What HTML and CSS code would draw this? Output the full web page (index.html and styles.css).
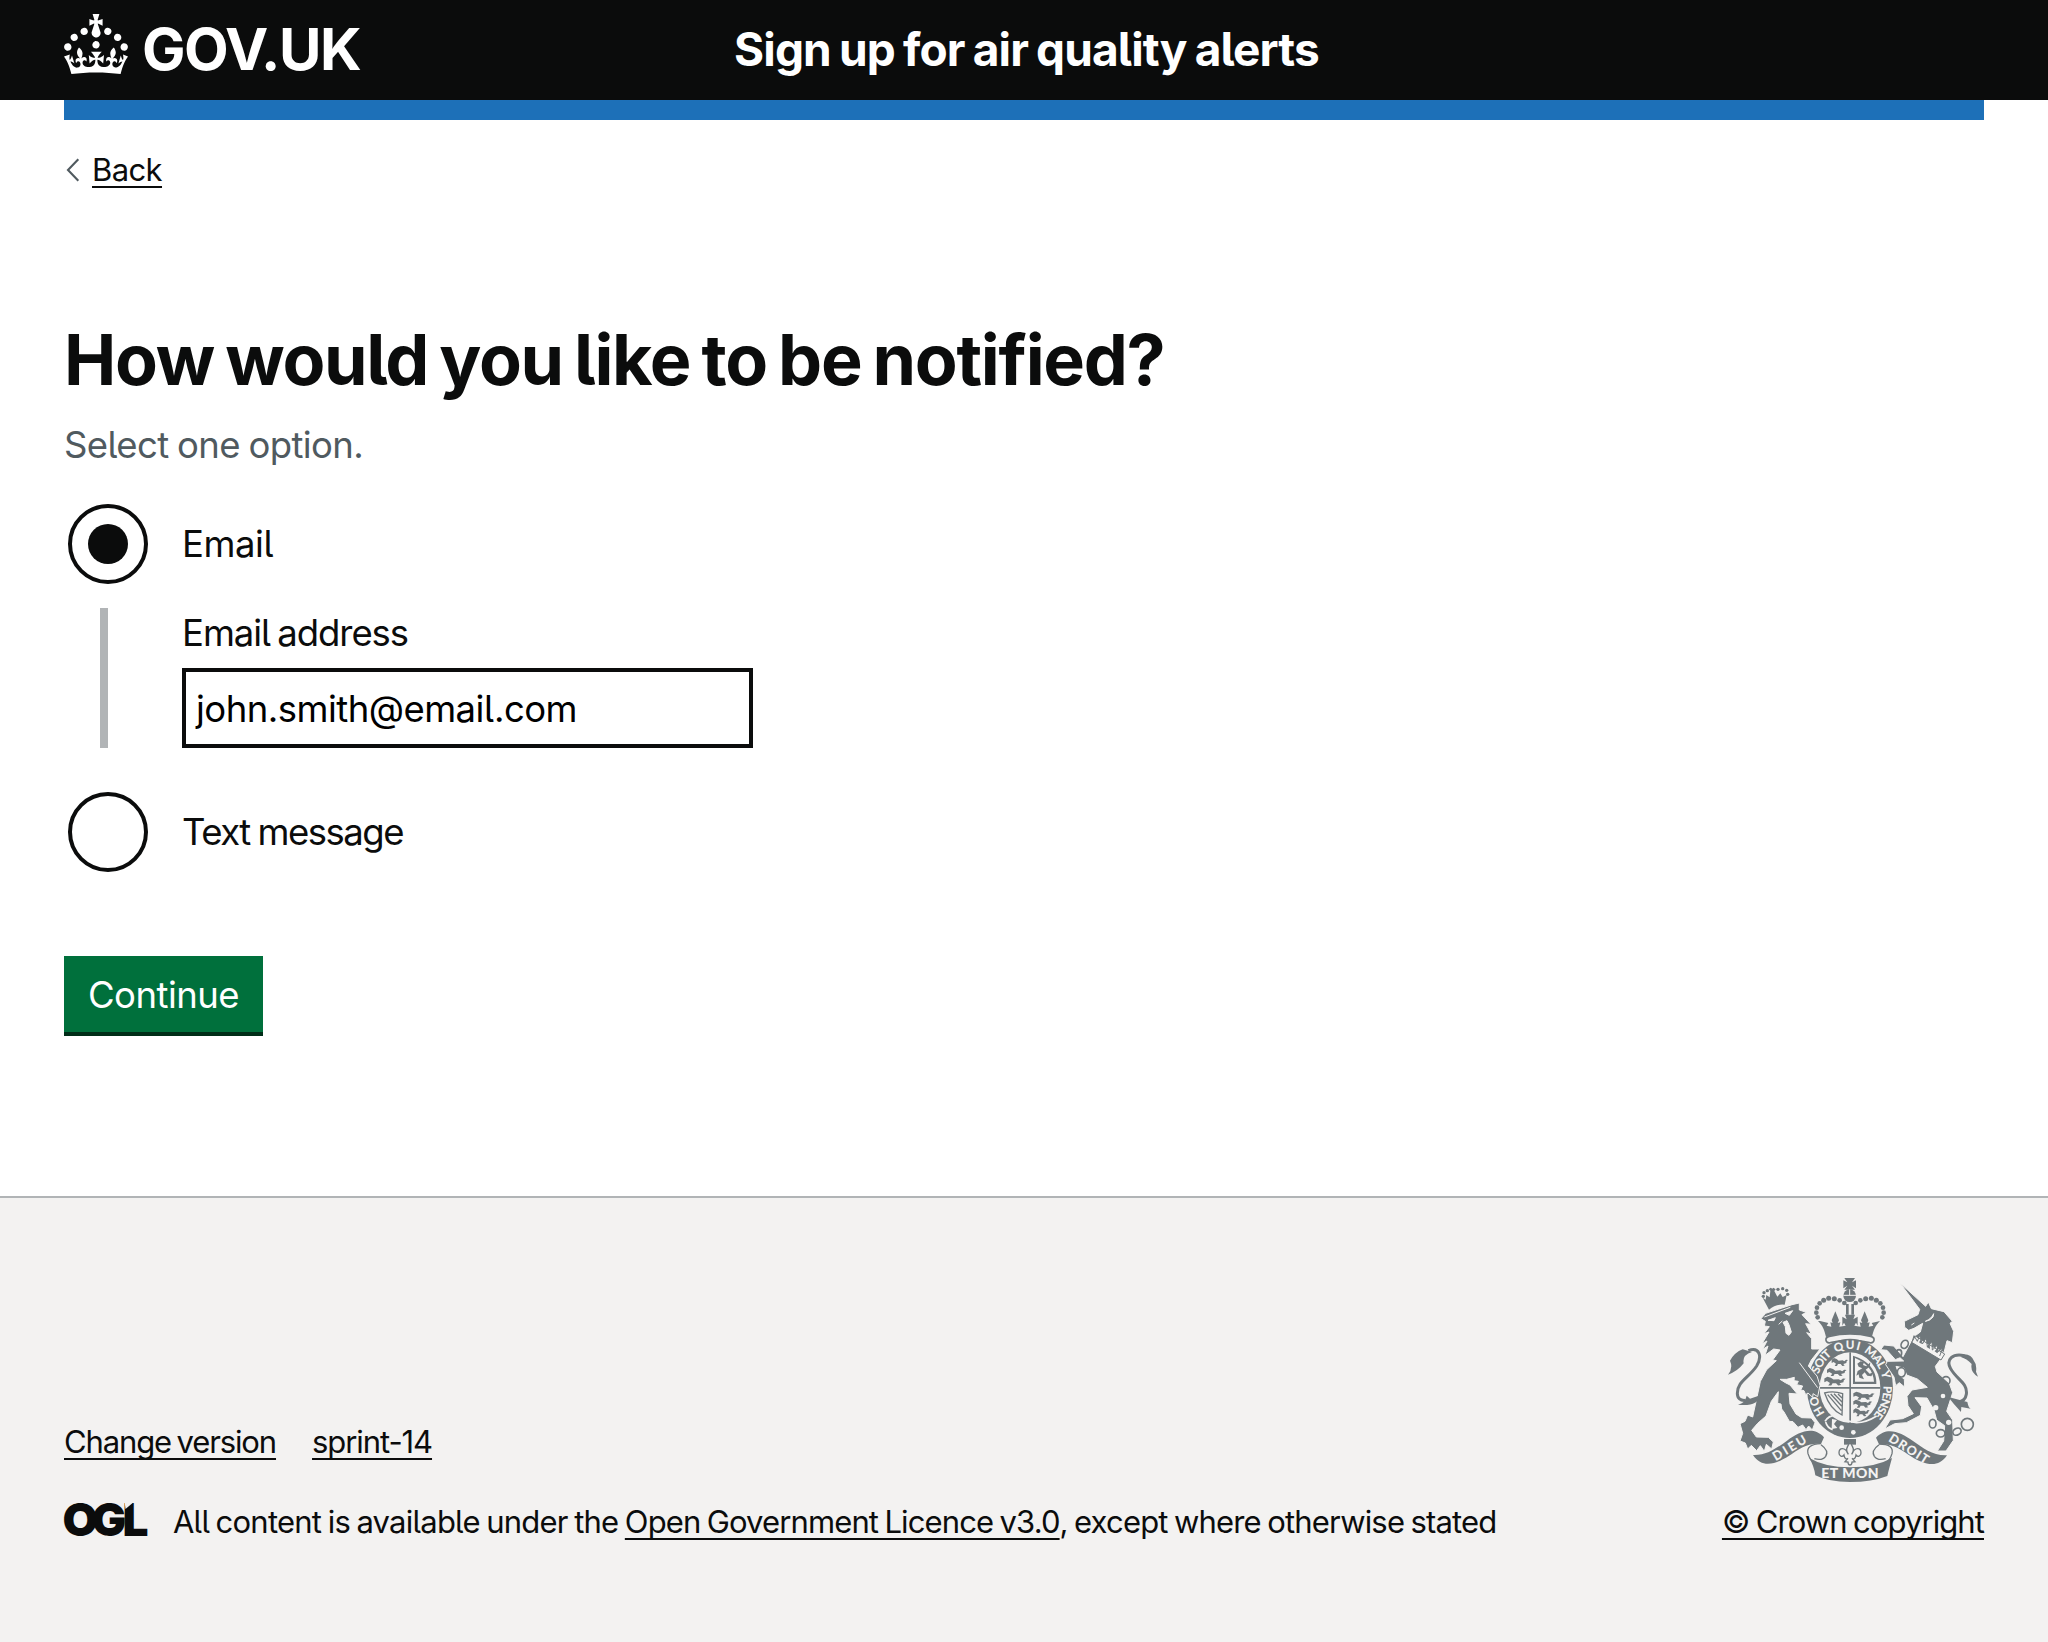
FILE: index.html
```html
<!DOCTYPE html>
<html lang="en">
<head>
<meta charset="utf-8">
<title>How would you like to be notified?</title>
<link rel="stylesheet" href="styles.css">
</head>
<body>
<header class="header">
  <div class="header-inner">
    <a class="logo" href="#">
      <svg class="crown" viewBox="0 0 32 30" aria-hidden="true"><path fill="currentColor" d="M22.6 10.4c-1 .4-2-.1-2.4-1-.4-.9.1-2 1-2.4.9-.4 2 .1 2.4 1s-.1 2-1 2.4m-5.9 6.7c-.9.4-2-.1-2.4-1-.4-.9.1-2 1-2.4.9-.4 2 .1 2.4 1s-.1 2-1 2.4m10.8-3.7c-1 .4-2-.1-2.4-1-.4-.9.1-2 1-2.4.9-.4 2 .1 2.4 1s0 2-1 2.4m3.3 4.8c-1 .4-2-.1-2.4-1-.4-.9.1-2 1-2.4.9-.4 2 .1 2.4 1s-.1 2-1 2.4M17 4.7l2.3 1.2V2.5l-2.3.7-.2-.2.9-3h-3.4l.9 3-.2.2c-.1.1-2.3-.7-2.3-.7v3.4L15 4.7c.1.1.1.2.2.2l-1.3 4c-.1.2-.1.4-.1.6 0 1.1.8 2 1.9 2.2h.7c1-.2 1.9-1.1 1.9-2.1 0-.2 0-.4-.1-.6l-1.3-4c-.1-.2 0-.2.1-.3m-7.6 5.7c.9.4 2-.1 2.4-1 .4-.9-.1-2-1-2.4-.9-.4-2 .1-2.4 1s0 2 1 2.4m-5 3c.9.4 2-.1 2.4-1 .4-.9-.1-2-1-2.4-.9-.4-2 .1-2.4 1s.1 2 1 2.4m-3.2 4.8c.9.4 2-.1 2.4-1 .4-.9-.1-2-1-2.4-.9-.4-2 .1-2.4 1s0 2 1 2.4m14.8 11c4.4 0 8.6.3 12.3.8 1.1-4.5 2.4-7 3.7-8.8l-2.5-.9c.2 1.3.3 1.9 0 2.7-.4-.4-.8-1.1-1.1-2.3l-1.2 4c.7-.5 1.3-.8 2-.9-1.1 2.5-2.6 3.1-3.5 3-1.1-.2-1.7-1.2-1.5-2.1.3-1.2 1.5-1.5 2.1-.1 1.1-2.3-.8-3-2-2.3 1.9-1.9 2.1-3.5.6-5.6-2.1 1.6-2.1 3.2-1.2 5.5-1.2-1.4-3.2-.6-2.5 1.6.9-1.4 2.1-.5 1.9.8-.2 1.1-1.7 2.1-3.5 1.9-2.7-.2-2.9-2.1-2.9-3.6.7-.1 1.9.5 2.9 1.9l.4-4.3c-1.1 1.1-2.1 1.4-3.2 1.4.4-1.2 2.1-3 2.1-3h-5.4s1.7 1.9 2.1 3c-1.1 0-2.1-.2-3.2-1.4l.4 4.3c1-1.4 2.2-2 2.9-1.9-.1 1.5-.2 3.4-2.9 3.6-1.9.2-3.4-.8-3.5-1.9-.2-1.3 1-2.2 1.9-.8.7-2.3-1.2-3-2.5-1.6.9-2.2.9-3.9-1.2-5.5-1.5 2-1.3 3.7.6 5.6-1.2-.7-3.1 0-2 2.3.6-1.4 1.8-1.1 2.1.1.2.9-.3 1.9-1.5 2.1-.9.2-2.4-.5-3.5-3 .6 0 1.2.3 2 .9l-1.2-4c-.3 1.1-.7 1.9-1.1 2.3-.3-.8-.2-1.4 0-2.7l-2.9.9C1.3 23 2.6 25.5 3.7 30c3.7-.5 7.9-.8 12.3-.8"/></svg>
      <span class="logo-text">GOV.UK</span>
    </a>
    <a class="service" href="#">Sign up for air quality alerts</a>
  </div>
</header>
<div class="container">
  <div class="bar"></div>
  <a class="back" href="#">
    <svg class="chevron" viewBox="0 0 14 24" aria-hidden="true"><path d="M12.3 1.3 2 12l10.3 10.7" fill="none" stroke="#505a5f" stroke-width="2.1"/></svg>
    <span class="link back-text">Back</span>
  </a>
  <main class="main">
    <h1>How would you like to be notified?</h1>
    <p class="hint">Select one option.</p>
    <div class="radio"><span class="dot checked"></span><label class="t-email">Email</label></div>
    <div class="conditional">
      <label class="t-address">Email address</label>
      <div class="input">john.smith@email.com</div>
    </div>
    <div class="radio"><span class="dot"></span><label class="t-text">Text message</label></div>
    <button class="button">Continue</button>
  </main>
</div>
<footer class="footer">
  <div class="footer-inner">
    <div class="meta">
      <div class="links"><a class="link l-change" href="#">Change version</a><a class="link l-sprint" href="#">sprint-14</a></div>
      <div class="licence">
        <svg class="ogl" viewBox="-3 -12 90 60" aria-label="OGL"><text class="ogl-text" y="34.5" x="-1.5 27.5 58.5">OGL</text><path d="M60.500 0H71L61.500 8z" fill="#f3f2f1"/></svg>
        <p><span class="l-all">All content is available under the </span><a class="link l-ogl" href="#">Open Government Licence v3.0</a><span class="l-exc">, except where otherwise stated</span></p>
      </div>
    </div>
    <div class="copyright">
      <svg class="arms" viewBox="48 48 768 624" aria-hidden="true">
        <defs>
          <path id="garter" d="M420 499A100 116 0 0 1 420 267A100 116 0 0 1 420 499"/>
          <path id="beast" d="M0 5l7-5 8 3 6 5 12-1 5 3 5-5 6 1-4 4-1 5-9 3 4 5-7 1-5-6-8 0-3 6-7 0 4-7-7-5-6 3z"/>
        </defs>
        <g class="ink">
          <path d="M403 54h32l-9 13 12-6v24l-12-8 9 12h-32l9-12-12 8V61l12 6z"/>
          <circle cx="419" cy="107" r="19"/>
          <path d="M400 106h38M419 88v18" stroke="#f3f2f1" stroke-width="3"/>
          <g id="beads"><circle cx="403" cy="129" r="7"/><circle cx="389" cy="121" r="7"/><circle cx="373" cy="116" r="7.5"/><circle cx="356" cy="115" r="7.5"/><circle cx="341" cy="121" r="7.5"/><circle cx="329" cy="130" r="7"/><circle cx="321" cy="143" r="7"/><circle cx="319" cy="158" r="7"/><circle cx="323" cy="172" r="7"/></g>
          <use href="#beads" transform="matrix(-1 0 0 1 840 0)"/>
          <path d="M408 132h8v32h-8zM424 132h8v32h-8z"/>
          <path d="M330 183l25 6-5 8 14 3-3-13 7 2-3-8 11-27 11 27-4 8 8-2-3 13 19-3-5-9-5 9v-27l13 8-5-14h30l-5 14 13-8v27l-5-9-5 9 19 3-3-13 8 2-4-8 11-27 11 27-3 8 7-2-3 13 14-3-5-8 25-6c-14 13-20 29-24 48-46-12-92-12-138 0-4-19-10-35-24-48z"/>
          <path d="M358 229q62-14 124 0 12 3 10 12-2 9-13 7-59-16-118 0-11 2-13-7-2-9 10-12z" fill="#f3f2f1" stroke="#6f777b" stroke-width="5"/>
          <ellipse cx="420" cy="385" rx="129" ry="149"/>
        </g>
        <ellipse cx="420" cy="383" rx="91" ry="106" fill="#f3f2f1"/>
        <g class="arms-text garter-text">
          <text><textPath href="#garter" startOffset="88" textLength="58">HO</textPath></text>
          <text><textPath href="#garter" startOffset="210" textLength="72">SOIT</textPath></text>
          <text><textPath href="#garter" startOffset="294" textLength="73">QUI</textPath></text>
          <text><textPath href="#garter" startOffset="381" textLength="72">MAL</textPath></text>
          <text><textPath href="#garter" startOffset="461">Y</textPath></text>
          <text><textPath href="#garter" startOffset="503" textLength="96">PENSE</textPath></text>
        </g>
        <g class="ink">
          <path d="M418 277h5v212h-5zM329 381h182v5H329z"/>
          <use href="#beast" transform="translate(365 294)"/><use href="#beast" transform="translate(351 324) scale(1.2 1)"/><use href="#beast" transform="translate(343 350) scale(1.3 1.1)"/>
          <use href="#beast" transform="translate(430 395) scale(1.3 1)"/><use href="#beast" transform="translate(430 419) scale(1.15 1)"/><use href="#beast" transform="translate(430 445) scale(1)"/>
          <path d="M452 304l10 3-3 8 10 4 12-12-2 13-12 9 12 12 12-4-7 12-12-2-8-10-8 8 6 13-14-5-2-10-7 4 4-14 14-8-11-5-4-9z"/>
          <path d="M429 287v85h70c3-38-24-72-70-85zm6 7c35 14 55 38 57 71h-57z" fill-rule="evenodd"/>
          <path d="M344 399q25-8 54 2l-2 64q-36-17-52-66zm9 5l41 48M362 402l33 36M372 401l24 25M384 402l12 12" fill="none" stroke="#6f777b" stroke-width="4"/>
        </g>
        <path d="M345 484q10-18 33-18 16 15 62 22 28 0 60-20" fill="none" stroke="#f3f2f1" stroke-width="5"/>
        <path d="M347 486q5 18 21 23" fill="none" stroke="#f3f2f1" stroke-width="5"/>
        <circle cx="395" cy="503" r="7" fill="#f3f2f1"/><circle cx="430" cy="517" r="7" fill="#f3f2f1"/><path d="M366 477l15 3-9 12 10 12-17 3" fill="#f3f2f1"/>
        <g class="ink halo">
          <path d="M153 176L167 160 246 134 268 129 268 150 289 157 276 164 303 193 287 191 304 222 290 218 305 236 305 267 330 267 304 300 295 318 321 348 330 376 323 410 309 401 308 412 294 399 287 404 282 392 272 390 278 378 260 374 265 364 252 362 253 352 230 358 210 358 226 368 240 375 262 402 237 400 240 432 258 462 275 473 304 474 315 488 307 510 296 498 288 509 278 495 264 502 249 485 238 484 222 456 215 447 213 432 203 430 205 395 184 424 168 468 143 490 125 511 139 531 175 532 190 546 185 567 169 553 163 574 151 557 140 572 124 556 113 567 106 549 90 543 98 520 90 491 105 484 113 465 128 471 140 416 151 364 170 329 199 302 188 300 210 270 191 267 165 286 174 258 158 268 171 243 156 251 177 216 162 221 178 200 163 198 166 184z"/>
          <path d="M524 507L540 480 578 476 610 461 594 437 591 409 606 390 652 382 622 357 590 345 582 324 558 319 568 345 583 358 584 381 568 368 557 377 552 351 527 314 532 304 581 303 570 293 556 299 531 271 512 269 522 255 551 258 579 290 604 243 622 250 696 292 676 319 681 336 718 370 728 398 710 454 728 480 730 541 708 573 682 573 701 543 704 497 680 480 672 450 651 414 615 413 635 440 631 466 589 488 554 491z"/>
          <path d="M570 69L647 139 655 126 664 146 702 155 727 184 720 190 731 214 727 248 711 242 702 278 610 231 631 216 638 190 612 205 596 211 584 202 583 184 624 164 629 148z"/>
        </g>
        <g class="ink">
          <path d="M158 113l9 6 2-14 10 7 2-20-5-4 6-5 5 3 3-3 7 5-4 5 9 17 9-10 7 11 12-6-6 29q-26-3-47 15z"/>
          <circle cx="160" cy="109" r="5"/><circle cx="162" cy="98" r="5"/><circle cx="172" cy="92" r="5"/><circle cx="204" cy="88" r="5"/><circle cx="218" cy="86" r="5"/><circle cx="230" cy="91" r="5"/><circle cx="233" cy="103" r="5"/>
          <path d="M54 344q16-20 6-42 14-25 38-34l28 8q-30 9-25 34-18 24-47 34zM84 434q22-5 26-27l10 9 35-12q-13 37-71 30zM804 350q-24-14-19-38-16-16-31-20l2-9q27-4 36 20 9 10 6 32zM772 426q4 19 10 20l-28-5-1 15-22-25-16-20z"/>
          <path d="M115 272c34-13 42 18 25 46-24 36-58 46-58 82 0 15 9 23 25 21M763 287c-34-8-57 11-41 39 17 32 52 43 47 77-2 14-11 22-25 23" fill="none" stroke="#6f777b" stroke-width="9"/>
        </g>
        <path d="M163 171l78-29M174 181l22-8-4 9zM225 160l23-8-10 14zM219 187l12-5 6 12 7 22-7 10-9-6-2-20zM206 193l11-10M604 195l9-6M646 184q19-8 25-23l-2 10q-9 12-23 13M493 290l12 5M268 308l55 75" fill="#f3f2f1" stroke="#f3f2f1" stroke-width="3"/>
        <path d="M616 228l88 54-11 18-88-53zM607 244l5-17 10 17 7-18 8 26 12-18 3 26 14-15 1 25 16-15-1 22 16-13-9 24" fill="#f3f2f1" stroke="#6f777b" stroke-width="3"/>
        <path d="M627 247l7-10 1 15zM650 261l9-12 1 18zM674 274l9-11-1 17z" class="ink"/>
        <g fill="none" stroke="#6f777b" stroke-width="5"><ellipse cx="584" cy="253" rx="10" ry="13" transform="rotate(30 584 253)"/><ellipse cx="567" cy="279" rx="8" ry="10"/><ellipse cx="574" cy="337" rx="12" ry="14" fill="#f3f2f1"/><circle cx="708" cy="362" r="12"/><ellipse cx="668" cy="491" rx="10" ry="13"/><ellipse cx="692" cy="520" rx="13" ry="11"/><ellipse cx="741" cy="515" rx="13" ry="10" transform="rotate(-30 741 515)"/><circle cx="772" cy="493" r="18"/></g>
        <g fill="#f3f2f1"><circle cx="699" cy="408" r="7"/><circle cx="677" cy="443" r="8"/><circle cx="716" cy="487" r="8"/></g>
        <g class="ink">
          <path d="M129 585c42 2 72-22 102-43 38-27 78-45 111-10l-9 20c-41-4-66 16-98 37-32 20-78 40-106-4zM711 586c-42 2-72-22-102-43-38-27-78-45-111-10l9 20c41-4 66 16 98 37 32 20 78 40 106-4z"/>
          <path d="M333 551q-46 2-39 30 8 25 22 28M507 552q46 0 39 29-6 21-20 28M333 554q25 18 14 35-10 14-34 7M507 554q-25 18-14 35 10 14 34 7" fill="none" stroke="#6f777b" stroke-width="4"/>
          <path d="M298 594q46 28 122 28t126-28q-10 36-14 54-46 18-112 18t-104-20q-4-28-18-52z"/>
          <path d="M402 537h36v17h-36z"/>
          <path d="M420 547c-11 16-14 24-5 36-10-24-28-20-28-4 0 10 10 13 15 6 2 13 8 14 12 10l-9 10 9 1q0 9 6 9t6-9l9-1-9-10c4 4 10 3 12-10 5 7 15 4 15-6 0-16-18-20-28 4 9-12 6-20-5-36z" fill="#f3f2f1" stroke="#6f777b" stroke-width="4"/>
        </g>
        <g class="arms-text">
          <text class="motto" transform="translate(197 604) rotate(-31)" textLength="112">DIEU</text>
          <text class="motto" transform="translate(533 542) rotate(32)" textLength="134">DROIT</text>
          <text x="334" y="654" textLength="172">ET MON</text>
        </g>
      </svg>
      <a class="link l-crown" href="#">© Crown copyright</a>
    </div>
  </div>
</footer>
</body>
</html>
```
FILE: styles.css
```css
* { box-sizing: border-box; }
body {
  margin: 0;
  background: #f3f2f1;
  color: #0b0c0c;
  font-family: Inter, "Noto Sans", sans-serif;
  font-feature-settings: "cv05" 1;
  font-size: 36.5px;
  line-height: 50px;
}
a { color: inherit; text-decoration: none; }
h1, p { margin: 0; }
.header { height: 100px; background: #0b0c0c; color: #fff; }
.header-inner { display: flex; height: 100px; padding: 0 64px; }
.logo { display: flex; width: 670px; padding-top: 14px; }
.crown { width: 64px; height: 60px; }
.logo-text { margin-left: 14px; font-size: 58px; font-weight: 700; letter-spacing: -1.5px; line-height: 70px; white-space: nowrap; }
.service { font-size: 46px; font-weight: 700; letter-spacing: -0.85px; word-spacing: -2px; line-height: 98px; white-space: nowrap; }
.container { padding: 0 64px; background: #fff; height: 1096px; }
.bar { height: 20px; background: #1d70b8; }
.back { display: flex; margin-top: 30px; height: 40px; font-size: 31px; line-height: 40px; }
.back-text { letter-spacing: -0.6px; }
.chevron { width: 14px; height: 24px; margin: 8px 12px 0 2px; }
.link { text-decoration: underline; text-decoration-thickness: 2px; text-underline-offset: 5px; text-decoration-skip-ink: none; white-space: nowrap; }
.main { display: flex; flex-direction: column; align-items: flex-start; padding-top: 130px; }
h1 { font-size: 70px; font-weight: 700; letter-spacing: -1.3px; word-spacing: -4px; line-height: 80px; white-space: nowrap; }
.hint { margin-top: 20px; color: #505a5f; letter-spacing: -0.64px; word-spacing: -1px; }
.radio { display: flex; align-items: center; height: 80px; margin-left: 4px; }
.hint + .radio { margin-top: 34px; }
.dot { display: grid; place-items: center; width: 80px; height: 80px; margin-right: 34px; border: 4px solid #0b0c0c; border-radius: 50%; }
.checked::after { content: ""; width: 40px; height: 40px; border-radius: 50%; background: #0b0c0c; }
.conditional { display: flex; flex-direction: column; height: 140px; margin: 24px 0 44px 36px; padding-left: 74px; border-left: 8px solid #b1b4b6; }
.conditional label { height: 60px; }
.t-email { letter-spacing: -0.46px; }
.t-address { letter-spacing: -1.05px; word-spacing: -2px; }
.t-text { letter-spacing: -1.5px; word-spacing: -1px; }
.input { width: 571px; height: 80px; border: 4px solid #0b0c0c; padding: 12px 10px; color: #000; letter-spacing: -0.53px; }
.button { width: 199px; height: 80px; margin-top: 84px; padding: 1px 0 4px; border: 0; background: #00703c; box-shadow: inset 0 -4px #002d18; color: #fff; font: inherit; font-feature-settings: inherit; letter-spacing: -0.54px; }
.footer { height: 446px; border-top: 2px solid #b1b4b6; background: #f3f2f1; font-size: 31px; line-height: 40px; }
.footer-inner { display: flex; justify-content: space-between; align-items: flex-end; height: 344px; padding: 0 64px; }
.links { display: flex; gap: 36px; margin-bottom: 40px; }
.l-change { letter-spacing: -1.13px; word-spacing: -2px; }
.l-sprint { letter-spacing: -1.085px; }
.licence { display: flex; height: 40px; }
.licence p { white-space: nowrap; }
.l-all { letter-spacing: -0.77px; word-spacing: -1.5px; }
.l-ogl { letter-spacing: -0.88px; word-spacing: -1.5px; }
.l-exc { letter-spacing: -0.83px; word-spacing: -1.5px; }
.l-crown { letter-spacing: -0.91px; word-spacing: -1.5px; }
.ogl { width: 90px; height: 60px; margin: -13px 22px 0 -3px; }
.ogl-text { font-size: 46px; font-weight: 900; fill: #0b0c0c; }
.copyright { display: flex; flex-direction: column; align-items: flex-end; }
.arms { width: 256px; height: 208px; margin: 0 2px 18px 0; }
.ink { fill: #6f777b; }
.halo { stroke: #f3f2f1; stroke-width: 3; }
.arms-text { font-family: Lato, sans-serif; font-size: 42px; font-weight: 900; fill: #f3f2f1; }
.garter-text { font-size: 35px; }
.motto { font-size: 38px; }
```
